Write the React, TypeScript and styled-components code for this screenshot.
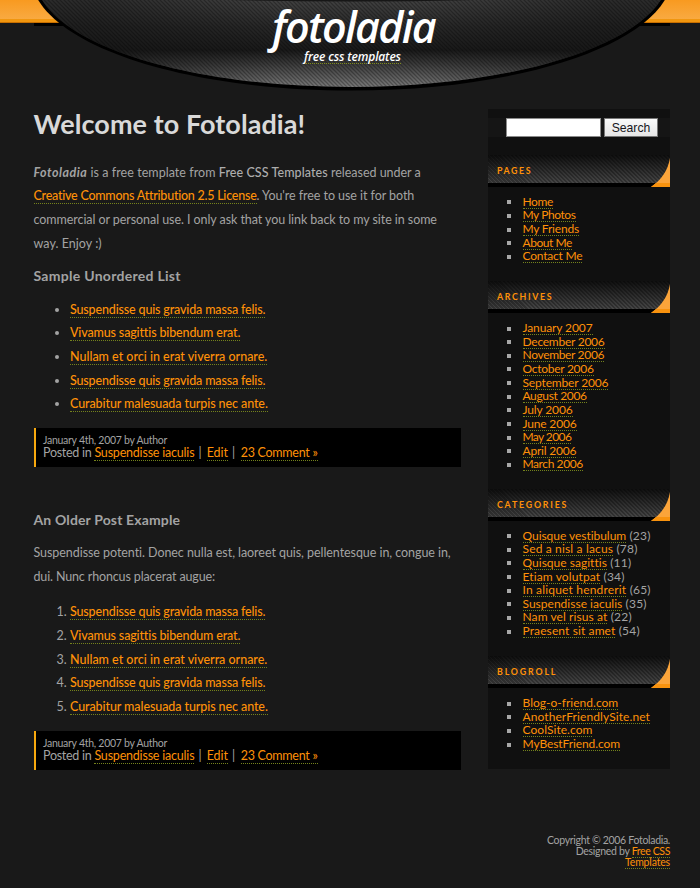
import React from "react";
import styled, { createGlobalStyle } from "styled-components";

const GlobalStyle = createGlobalStyle`
  * { box-sizing: border-box; }
  body {
    margin: 0;
    background: #191919;
    color: #a3a3a3;
    font: 12.5px/23.67px Lato, "Open Sans", sans-serif;
  }
`;

type Item = { text: string; track: number; count?: number };

const posts: Item[] = [
  { text: "Suspendisse quis gravida massa felis.", track: -0.16 },
  { text: "Vivamus sagittis bibendum erat.", track: -0.15 },
  { text: "Nullam et orci in erat viverra ornare.", track: -0.01 },
  { text: "Suspendisse quis gravida massa felis.", track: -0.16 },
  { text: "Curabitur malesuada turpis nec ante.", track: -0.09 },
];

const sections: { title: string; track: number; space: number; items: Item[] }[] = [
  {
    title: "Pages", track: 1.6, space: 18,
    items: [
      { text: "Home", track: -0.4 },
      { text: "My Photos", track: -0.42 },
      { text: "My Friends", track: -0.2 },
      { text: "About Me", track: -0.44 },
      { text: "Contact Me", track: -0.2 },
    ],
  },
  {
    title: "Archives", track: 1.68, space: 17.5,
    items: [
      { text: "January 2007", track: -0.11 },
      { text: "December 2006", track: -0.25 },
      { text: "November 2006", track: -0.33 },
      { text: "October 2006", track: -0.27 },
      { text: "September 2006", track: -0.15 },
      { text: "August 2006", track: -0.35 },
      { text: "July 2006", track: -0.13 },
      { text: "June 2006", track: -0.17 },
      { text: "May 2006", track: -0.6 },
      { text: "April 2006", track: -0.21 },
      { text: "March 2006", track: -0.41 },
    ],
  },
  {
    title: "Categories", track: 1.8, space: 18.5,
    items: [
      { text: "Quisque vestibulum", track: -0.04, count: 23 },
      { text: "Sed a nisl a lacus", track: 0.16, count: 78 },
      { text: "Quisque sagittis", track: 0.02, count: 11 },
      { text: "Etiam volutpat", track: 0.12, count: 34 },
      { text: "In aliquet hendrerit", track: 0.18, count: 65 },
      { text: "Suspendisse iaculis", track: 0.01, count: 35 },
      { text: "Nam vel risus at", track: 0.09, count: 22 },
      { text: "Praesent sit amet", track: 0.11, count: 54 },
    ],
  },
  {
    title: "Blogroll", track: 1.85, space: 18,
    items: [
      { text: "Blog-o-friend.com", track: 0.01 },
      { text: "AnotherFriendlySite.net", track: 0.09 },
      { text: "CoolSite.com", track: 0.05 },
      { text: "MyBestFriend.com", track: -0.09 },
    ],
  },
];

const Page = styled.div`
  width: 700px;
  height: 888px;
`;

const Header = styled.header`
  display: grid;
  height: 109px;
  > * { grid-area: 1 / 1; }
`;

const Brand = styled.div`
  display: flex;
  flex-direction: column;
  align-items: center;
  color: #fff;
  z-index: 1;
  padding-left: 5px;
`;

const Logo = styled.h1`
  margin: 5px 0 0 2px;
  font: italic 600 43px/44px "Open Sans", sans-serif;
  letter-spacing: -1.75px;
`;

const Tagline = styled.a`
  height: 15px;
  font: italic 600 12px/15px "Open Sans", sans-serif;
  letter-spacing: -0.14px;
  border-bottom: 1px dotted #7d8a1c;
`;

const Columns = styled.div`
  display: flex;
  justify-content: space-between;
  padding: 0 30px 0 33.5px;
`;

const Main = styled.main`
  width: 427px;
`;

const Title = styled.h2`
  margin: -1px 0 0;
  font-size: 27px;
  line-height: 31px;
  color: #d9d9d9;
  letter-spacing: 0.06px;
`;

const Intro = styled.div`
  height: 127px;
  padding-top: 21.5px;
`;

const Subtitle = styled.h3<{ $track: number }>`
  margin: 0;
  font-size: 14px;
  line-height: 20px;
  letter-spacing: ${(p) => p.$track}px;
`;

const Line = styled.p<{ $track?: number }>`
  margin: 0;
  white-space: pre;
  letter-spacing: ${(p) => p.$track ?? 0}px;
`;

const Run = styled.span<{ $track: number }>`
  letter-spacing: ${(p) => p.$track}px;
`;

const Name = styled.em`
  font-weight: 700;
  letter-spacing: 0.5px;
`;

const Strong = styled.b`
  font-weight: 500;
  color: #adadad;
  letter-spacing: 0.08px;
`;

const Link = styled.a<{ $track: number }>`
  color: #ff9108;
  letter-spacing: ${(p) => p.$track}px;
  border-bottom: 1px dotted #74821c;
`;

const MainLink = styled(Link)`
  font-weight: 500;
`;

const Bullets = styled.ul`
  margin: 11.5px 0 12px;
  padding: 0 0 0 36.5px;
`;

const Numbers = styled.ol`
  margin: 12px 0 12px;
  padding: 0 0 0 36.5px;
`;

const Meta = styled.div`
  height: 39px;
  padding: 6px 0 0 7.5px;
  border-left: 2px solid #f7a80e;
  background: #000;
  line-height: 13px;
  white-space: pre;
`;

const Small = styled.div`
  font-size: 10.5px;
  line-height: 12.5px;
  letter-spacing: -0.27px;
`;

const Older = styled.div`
  padding-top: 43.5px;
`;

const OlderText = styled.div`
  padding-top: 10.5px;
`;

const Sidebar = styled.aside`
  width: 182px;
  height: 660px;
  background: #101010;
`;

const Search = styled.form`
  display: flex;
  gap: 3px;
  height: 19px;
  margin: 9px 0 18px;
  padding-left: 18px;
  background: #151515;
`;

const Input = styled.input`
  width: 95px;
  height: 19px;
  padding: 0;
  border: 1px solid #8a8a8a;
  background: #fff;
`;

const Button = styled.button`
  width: 54px;
  height: 19px;
  padding: 1px 0 0;
  border: 1px solid #777;
  background: linear-gradient(#fafafa, #e6e6e6);
  color: #16161c;
  font: 12.2px/15px "Liberation Sans", sans-serif;
`;

const Section = styled.section<{ $space: number }>`
  padding-bottom: ${(p) => p.$space}px;
`;

const Bar = styled.div`
  display: flex;
  justify-content: space-between;
  align-items: flex-end;
  height: 32px;
  border-bottom: 4px solid #000;
  background:
    repeating-linear-gradient(45deg, #0000 0 1.4px, #00000048 1.4px 2.83px),
    linear-gradient(#101010, #464646);
`;

const BarTitle = styled.h4<{ $track: number }>`
  margin: 0 0 5px;
  padding-left: 9px;
  font-size: 8.8px;
  line-height: 15px;
  text-transform: uppercase;
  color: #ff9108;
  letter-spacing: ${(p) => p.$track}px;
`;

const Curl = styled.svg`
  display: block;
  flex: none;
  margin-bottom: -4px;
`;

const SideList = styled.ul`
  margin: 0;
  padding: 8px 0 0 34.5px;
  list-style: none;
  font-size: 12px;
`;

const SideItem = styled.li`
  display: flex;
  align-items: center;
  height: 13.65px;
  line-height: 14px;
  white-space: pre;
  &::before {
    content: "";
    width: 4px;
    height: 4px;
    margin: 1px 12px 0 -16px;
    background: #a8a8a8;
  }
`;

const SideLink = styled(Link)`
  height: 14px;
  line-height: 14px;
`;

const Footer = styled.footer`
  margin-top: 65px;
  padding-right: 30px;
  text-align: right;
  font-size: 10.5px;
  line-height: 11px;
`;

const dome = "M41 -2C71 51 200 87 351 87S631 51 662 -2Z";

const HeaderArt = () => (
  <svg width="700" height="109" viewBox="0 0 700 109">
    <defs>
      <linearGradient id="amber" x2="0" y2="1">
        <stop offset="0" stopColor="#f89a20" />
        <stop offset="1" stopColor="#f9ad48" />
      </linearGradient>
      <linearGradient id="steel" gradientUnits="userSpaceOnUse" x1="0" y1="0" x2="0" y2="88">
        <stop offset="0" stopColor="#434343" />
        <stop offset=".3" stopColor="#292929" />
        <stop offset=".57" stopColor="#1a1a1a" />
        <stop offset=".7" stopColor="#363636" />
        <stop offset="1" stopColor="#7c7c7c" />
      </linearGradient>
      <radialGradient id="shade" gradientUnits="userSpaceOnUse" cx="351" cy="44" r="320">
        <stop offset=".25" stopColor="#161616" stopOpacity="0" />
        <stop offset=".8" stopColor="#161616" stopOpacity=".5" />
      </radialGradient>
      <pattern id="weave" width="4" height="4" patternUnits="userSpaceOnUse">
        <path d="M-1 -1L5 5M-1 3L1 5M3 -1L5 1" stroke="#000" strokeOpacity=".3" strokeWidth="1.3" fill="none" />
      </pattern>
    </defs>
    <rect width="700" height="23" fill="url(#amber)" />
    <rect y="19" width="700" height="3" fill="#f1960f" />
    <rect y="22" width="700" height="1" fill="#c86f00" />
    <rect x="34" y="23" width="636" height="3" fill="#000" />
    <path d="M37 -2C67 52 196 90.5 351 90.5S636 52 666 -2Z" fill="#000" />
    <path d={dome} fill="url(#steel)" />
    <path d={dome} fill="url(#shade)" />
    <path d={dome} fill="url(#weave)" />
    <path d="M230 0H475Q350 3 230 0Z" fill="#161616" />
  </svg>
);

const Posted = () => (
  <Meta>
    <Small>January 4th, 2007 by Author</Small>
    <Run $track={-0.27}>Posted in </Run>
    <Link $track={-0.2}>Suspendisse iaculis</Link>
    <Run $track={0.95}> | </Run>
    <Link $track={-0.1}>Edit</Link>
    <Run $track={1.1}> | </Run>
    <Link $track={-0.27}>23 Comment »</Link>
  </Meta>
);

const PostItems = () => (
  <>
    {posts.map((p, i) => (
      <li key={i}>
        <MainLink $track={p.track}>{p.text}</MainLink>
      </li>
    ))}
  </>
);

export default function App() {
  return (
    <Page>
      <GlobalStyle />
      <Header>
        <HeaderArt />
        <Brand>
          <Logo>fotoladia</Logo>
          <Tagline>free css templates</Tagline>
        </Brand>
      </Header>
      <Columns>
        <Main>
          <Title>Welcome to Fotoladia!</Title>
          <Intro>
            <Line>
              <Name>Fotoladia</Name>
              <Run $track={0.05}> is a free template from </Run>
              <Strong>Free CSS Templates</Strong>
              <Run $track={-0.02}> released under a</Run>
            </Line>
            <Line $track={-0.06}>
              <MainLink $track={-0.24}>Creative Commons Attribution 2.5 License</MainLink>. You're free to use it for both
            </Line>
            <Line $track={-0.07}>commercial or personal use. I only ask that you link back to my site in some</Line>
            <Line $track={0.04}>way. Enjoy :)</Line>
          </Intro>
          <Subtitle $track={0.28}>Sample Unordered List</Subtitle>
          <Bullets>
            <PostItems />
          </Bullets>
          <Posted />
          <Older>
            <Subtitle $track={0.14}>An Older Post Example</Subtitle>
            <OlderText>
              <Line $track={-0.06}>Suspendisse potenti. Donec nulla est, laoreet quis, pellentesque in, congue in,</Line>
              <Line $track={-0.14}>dui. Nunc rhoncus placerat augue:</Line>
            </OlderText>
            <Numbers>
              <PostItems />
            </Numbers>
            <Posted />
          </Older>
        </Main>
        <Sidebar>
          <Search>
            <Input />
            <Button type="button">Search</Button>
          </Search>
          {sections.map((s) => (
            <Section key={s.title} $space={s.space}>
              <Bar>
                <BarTitle $track={s.track}>{s.title}</BarTitle>
                <Curl width="19" height="29" viewBox="0 0 19 29">
                  <path d="M19 0V29H0Q16 18 19 0Z" fill="#fba43a" />
                  <path d="M5 25H19V29H0Z" fill="#f8920e" />
                </Curl>
              </Bar>
              <SideList>
                {s.items.map((it) => (
                  <SideItem key={it.text}>
                    <SideLink $track={it.track}>{it.text}</SideLink>
                    {it.count !== undefined && <Run $track={0.2}>{` (${it.count})`}</Run>}
                  </SideItem>
                ))}
              </SideList>
            </Section>
          ))}
        </Sidebar>
      </Columns>
      <Footer>
        <Line $track={-0.31}>Copyright © 2006 Fotoladia.</Line>
        <Line $track={-0.3}>
          Designed by <Link $track={-0.37}>Free CSS</Link>
        </Line>
        <Line>
          <Link $track={-0.16}>Templates</Link>
        </Line>
      </Footer>
    </Page>
  );
}
